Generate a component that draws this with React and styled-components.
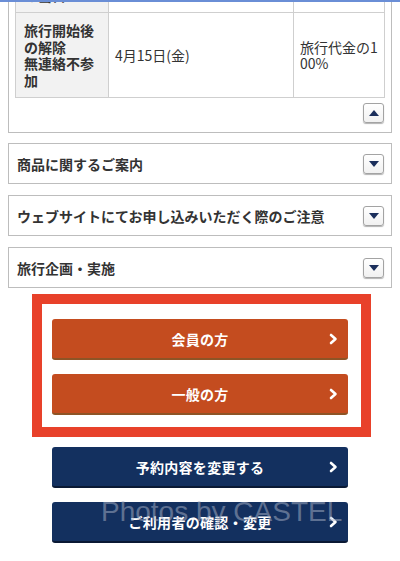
import React from "react"
import styled, { createGlobalStyle } from "styled-components"

const GlobalStyle = createGlobalStyle`
  html, body {
    margin: 0;
    padding: 0;
    background: #fff;
  }
  body {
    font-family: "Noto Sans CJK JP", "Liberation Sans", sans-serif;
    color: #333;
  }
`

const Page = styled.div`
  position: relative;
  width: 400px;
  height: 561px;
  overflow: hidden;
  background: #fff;
`

const TopRule = styled.div`
  position: relative;
  z-index: 2;
  height: 2px;
  background: #6a8ed6;
`

const Content = styled.div`
  padding: 0 8px;
`

const Panel = styled.div`
  margin-top: -42px;
  border: 1px solid #bdbdbd;
  border-top: none;
  padding: 0 6px 9px;
`

const Table = styled.table`
  width: 100%;
  border-collapse: collapse;
  table-layout: fixed;
  font-size: 14px;
  line-height: 16.5px;
`

const HeadCell = styled.th`
  width: 76px;
  padding: 9px 8px;
  background: #f2f2f2;
  border: 1px solid #cfcfcf;
  text-align: left;
  font-weight: 700;
  vertical-align: middle;
`

const Cell = styled.td`
  width: ${(p) => p.$w || "auto"};
  padding: 9px 5px 9px 6px;
  border: 1px solid #cfcfcf;
  font-weight: 400;
  vertical-align: middle;
`

const PanelFoot = styled.div`
  display: flex;
  justify-content: flex-end;
  padding: 5px 1px 0 0;
`

const Toggle = styled.span`
  display: flex;
  align-items: center;
  justify-content: center;
  width: 21px;
  height: 20px;
  box-sizing: border-box;
  border: 1px solid #a3a3a3;
  border-radius: 3px;
  background: linear-gradient(#fff, #f1f1f1);
  box-shadow: 0 1px 1px rgba(0, 0, 0, 0.3);
`

const Accordions = styled.div`
  display: flex;
  flex-direction: column;
  gap: 11px;
  margin-top: 10px;
`

const AccordionRow = styled.div`
  display: flex;
  align-items: center;
  justify-content: space-between;
  height: 41px;
  box-sizing: border-box;
  border: 1px solid #bdbdbd;
  padding: 0 7px 0 8px;
  font-size: 14px;
  font-weight: 700;
  color: #333;
`

const Highlight = styled.div`
  display: flex;
  flex-direction: column;
  gap: 14px;
  margin: 6px 21px 0 24px;
  border: 10px solid #e8412a;
  padding: 15px 13px 12px 10px;
`

const Stack = styled.div`
  display: flex;
  flex-direction: column;
  align-items: center;
  gap: 14px;
  margin-top: 10px;
`

const ActionButton = styled.div`
  position: relative;
  display: flex;
  align-items: center;
  justify-content: center;
  width: 296px;
  height: 41px;
  box-sizing: border-box;
  border-radius: 3px;
  background: ${(p) => (p.$tone === "navy" ? "#13305f" : "#c44c1f")};
  border-bottom: 2px solid ${(p) => (p.$tone === "navy" ? "#0a1934" : "#8d5426")};
  color: #fff;
  font-size: 14px;
  font-weight: 700;
  letter-spacing: 0.3px;
`

const Chevron = styled.svg`
  position: absolute;
  right: 10px;
  top: 50%;
  margin-top: -6px;
`

const Watermark = styled.div`
  position: absolute;
  left: 101px;
  top: 498px;
  font-family: "Liberation Sans", sans-serif;
  font-size: 28px;
  line-height: 1;
  color: rgba(170, 178, 198, 0.5);
  white-space: nowrap;
  pointer-events: none;
`

const Triangle = ({ up }) => (
  <svg width="10" height="6" viewBox="0 0 10 6">
    <polygon points={up ? "0,6 10,6 5,0" : "0,0 10,0 5,6"} fill="#1b2f5c" />
  </svg>
)

const Arrow = () => (
  <Chevron width="9" height="12" viewBox="0 0 9 12">
    <polyline
      points="2,2 6.5,6 2,10"
      fill="none"
      stroke="#fff"
      strokeWidth="2.6"
      strokeLinecap="round"
      strokeLinejoin="round"
    />
  </Chevron>
)

const sections = [
  "商品に関するご案内",
  "ウェブサイトにてお申し込みいただく際のご注意",
  "旅行企画・実施",
]

export default function App() {
  return (
    <Page>
      <GlobalStyle />
      <TopRule />
      <Content>
        <Panel>
          <Table>
            <tbody>
              <tr>
                <HeadCell>
                  旅行開始日
                  <br />
                  の当日
                </HeadCell>
                <Cell $w="173px">4月14日(木)</Cell>
                <Cell>
                  旅行代金の5
                  <br />
                  0%
                </Cell>
              </tr>
              <tr>
                <HeadCell>
                  旅行開始後
                  <br />
                  の解除
                  <br />
                  無連絡不参
                  <br />加
                </HeadCell>
                <Cell $w="173px">4月15日(金)</Cell>
                <Cell>
                  旅行代金の1
                  <br />
                  00%
                </Cell>
              </tr>
            </tbody>
          </Table>
          <PanelFoot>
            <Toggle>
              <Triangle up />
            </Toggle>
          </PanelFoot>
        </Panel>

        <Accordions>
          {sections.map((s) => (
            <AccordionRow key={s}>
              {s}
              <Toggle>
                <Triangle />
              </Toggle>
            </AccordionRow>
          ))}
        </Accordions>

        <Highlight>
          <ActionButton>
            会員の方
            <Arrow />
          </ActionButton>
          <ActionButton>
            一般の方
            <Arrow />
          </ActionButton>
        </Highlight>

        <Stack>
          <ActionButton $tone="navy">
            予約内容を変更する
            <Arrow />
          </ActionButton>
          <ActionButton $tone="navy">
            ご利用者の確認・変更
            <Arrow />
          </ActionButton>
        </Stack>
      </Content>
      <Watermark>Photos by CASTEL</Watermark>
    </Page>
  )
}
